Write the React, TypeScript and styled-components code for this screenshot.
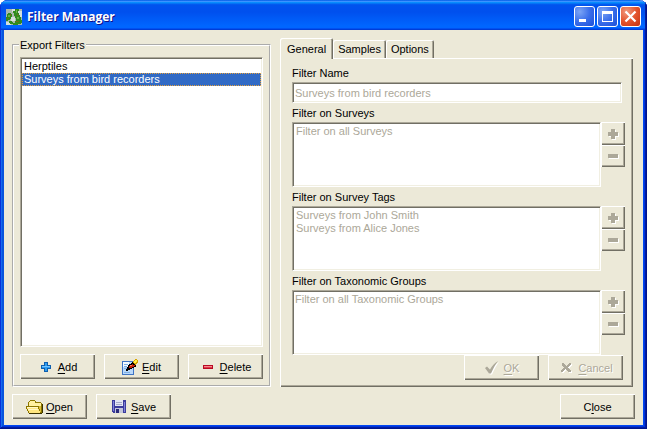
import React from "react";
import styled, { createGlobalStyle, css } from "styled-components";

const face = "#ece9d8";
const mid = "#aca899";
const dark = "#716f64";
const uiFont = `"Liberation Sans", Arial, sans-serif`;

const GlobalStyle = createGlobalStyle`
  *, *::before, *::after { box-sizing: border-box; }
  body { margin: 0; background: #fff; font: 11px/14px ${uiFont}; color: #000; }
  button, input { font: inherit; color: inherit; }
  ul { margin: 0; padding: 0; list-style: none; }
  svg { display: block; flex: none; }
`;

const raised = css`
  box-shadow: inset 1px 1px #fff, inset -1px -1px ${dark}, inset -2px -2px ${mid};
`;
const sunken = css`
  border: 1px solid;
  border-color: ${mid} #fff #fff ${mid};
  box-shadow: inset 1px 1px ${dark}, inset -1px -1px #f1efe2;
`;
const etched = css`
  color: ${mid};
  text-shadow: 1px 1px #fff;
`;

const Window = styled.main`
  display: flex;
  flex-direction: column;
  min-height: 100vh;
  padding: 0 4px 4px;
  background: ${face};
  border-radius: 8px 8px 0 0;
  overflow: hidden;
  box-shadow: inset -1px -1px #00138c, inset 1px 0 #0831d9, inset -2px -2px #001ea0,
    inset 2px 0 #166aee, inset -3px -3px #0133dd, inset 4px 0 #0855dd, inset -4px -4px #0048f1;
`;

const TitleBar = styled.header`
  display: flex;
  align-items: center;
  height: 30px;
  margin: 0 -4px;
  padding: 3px 6px 0;
  background: linear-gradient(180deg, #0058e6 0, #3a93ff 5%, #0997ff 7%, #0053ee 16%, #0050ee 40%, #0066ff 86%, #0066ff 92%, #005bff 94%, #003dd7 97%);
  box-shadow: inset 1px 0 #0831d9, inset -1px 0 #00138c, inset -2px 0 #001ea0;
`;
const Title = styled.h1`
  flex: 1;
  margin: 0 0 0 5px;
  font: bold 12px/18px "Open Sans", "Noto Sans", sans-serif;
  color: #fff;
  text-shadow: 1px 1px #0f1089;
`;
const Controls = styled.div`
  display: flex;
  gap: 2px;
`;
const ControlButton = styled.button<{ $danger?: boolean }>`
  display: grid;
  place-items: center;
  width: 21px;
  height: 21px;
  padding: 0;
  border: 1px solid #fff;
  border-radius: 3px;
  background: ${(p) =>
    p.$danger
      ? "radial-gradient(circle at 30% 25%, #f09a80, #e4552e 50%, #c43210)"
      : "radial-gradient(circle at 25% 25%, #7ba4f5, #3a6eea 50%, #1c4fd8)"};
`;

const Body = styled.div`
  flex: 1;
  display: flex;
  flex-direction: column;
  gap: 7px;
  padding: 8px 8px 6px;
`;
const Columns = styled.div`
  flex: 1;
  display: grid;
  grid-template-columns: minmax(0, 259fr) minmax(0, 353fr);
  gap: 9px;
  padding-right: 2px;
`;
const Group = styled.fieldset`
  display: flex;
  flex-direction: column;
  gap: 7px;
  min-width: 0;
  margin: 0;
  padding: 5px 6px 6px;
  border: 2px groove #fff;
`;
const Legend = styled.legend`
  margin-left: -1px;
  padding: 0 1px;
`;
const List = styled.ul<{ $disabled?: boolean; $flush?: boolean }>`
  ${sunken}
  flex: 1;
  min-width: 0;
  min-height: 65px;
  padding: ${(p) => (p.$flush ? "2px 0" : "2px 1px")};
  background: #fff;
  color: ${(p) => (p.$disabled ? mid : "#000")};
`;
const Item = styled.li<{ $selected?: boolean }>`
  padding: 0 2px;
  line-height: 13px;
  ${(p) =>
    p.$selected &&
    css`
      background: #316ac5;
      color: #fff;
      outline: 1px dotted #e5a03c;
      outline-offset: -1px;
    `}
`;
const ButtonRow = styled.div<{ $end?: boolean }>`
  display: flex;
  gap: 9px;
  justify-content: ${(p) => (p.$end ? "flex-end" : "flex-start")};
  padding-right: ${(p) => (p.$end ? "2px" : "0")};
`;
const Button = styled.button`
  ${raised}
  display: flex;
  align-items: center;
  justify-content: center;
  gap: 4px;
  width: 75px;
  height: 25px;
  padding: 0;
  border: 0;
  background: ${face};
  &:disabled { ${etched} }
  &:disabled svg { filter: drop-shadow(1px 1px 0 #fff); }
`;
const IconSlot = styled.span`
  display: grid;
  place-items: center;
  width: 16px;
  height: 16px;
`;
const Key = styled.span`
  text-decoration: underline;
  text-underline-offset: 2px;
`;
const Footer = styled.footer`
  display: flex;
  justify-content: space-between;
`;

const Tabbed = styled.section`
  display: flex;
  flex-direction: column;
  min-width: 0;
`;
const TabList = styled.div`
  display: flex;
  align-items: flex-end;
  height: 20px;
`;
const Tab = styled.button<{ $active?: boolean }>`
  height: ${(p) => (p.$active ? "21px" : "18px")};
  margin-bottom: ${(p) => (p.$active ? "-1px" : "0")};
  padding: 0 ${(p) => (p.$active ? "7px" : "5px")};
  border: 0;
  border-radius: 2px 2px 0 0;
  background: ${face};
  box-shadow: inset 1px 1px #fff, inset -1px 0 ${dark}, inset -2px 0 ${mid};
  z-index: ${(p) => (p.$active ? 1 : 0)};
`;
const Panel = styled.div`
  ${raised}
  flex: 1;
  display: flex;
  flex-direction: column;
  padding: 8px 8px 7px 12px;
`;
const Field = styled.div`
  display: flex;
  flex-direction: column;
  gap: 2px;
  padding-bottom: 3px;
`;
const ListField = styled(Field)`
  flex: 1;
  &:nth-last-child(2) { padding-bottom: 0; }
`;
const Caption = styled.label`
  height: 14px;
`;
const TextBox = styled.input`
  ${sunken}
  height: 21px;
  margin-right: 3px;
  padding: 0 2px;
  background: #fff;
  &:disabled { color: ${mid}; }
`;
const ListRow = styled.div`
  flex: 1;
  display: flex;
`;
const Stepper = styled.div`
  display: flex;
  flex-direction: column;
`;
const StepButton = styled.button`
  ${raised}
  display: grid;
  place-items: center;
  width: 24px;
  height: 23px;
  padding: 0;
  border: 0;
  background: ${face};
  & + & { height: 22px; }
  svg { filter: drop-shadow(1px 1px 0 #fff); }
`;

const AppIcon = () => (
  <svg width="16" height="16" viewBox="0 0 16 16" shapeRendering="crispEdges" aria-hidden="true">
    <path d="M0 0h16v16H0z" fill="#a9b8ae" />
    <path d="M6 0h3v3H6zM5 8h4v4H5zM12 2h4v6h-2V6h-2zM0 13h5v3H0z" fill="#d5e0dc" />
    <path d="M1 5h1V4h3v1h1v3H5v2H4v1H2v1H0V8h1zM9 0h4v2h-1v2h1v2h1v2h1v3h1v3h-1v1h-3v1H7v-2h2v-2h1V9H9V7H8V4H7V2h2z" fill="#2f8b20" />
    <path d="M3 12h3v1h1v2H4v-1H3z" fill="#2f8b20" />
    <path d="M2 6h2v2H2zM10 1h1v3h-1zM11 8h2v2h-2z" fill="#66b044" />
    <path d="M4 5h1v2H4zM1 9h2v1H1zM11 5h1v2h-1zM10 12h3v1h-3z" fill="#6f6b18" />
  </svg>
);
const AddIcon = () => (
  <svg width="10" height="10" viewBox="0 0 10 10" shapeRendering="crispEdges" aria-hidden="true">
    <path d="M3 0h4v3h3v4H7v3H3V7H0V3h3z" fill="#0f5fae" />
    <path d="M4 1h2v3h3v2H6v3H4V6H1V4h3z" fill="#2e9cf0" />
    <path d="M4 1h1v3H1v1h4V4h4v1H5V1z" fill="#76c6ff" />
  </svg>
);
const EditIcon = () => (
  <svg width="16" height="16" viewBox="0 0 16 16" shapeRendering="crispEdges" aria-hidden="true">
    <path d="M0 2h12v14H0z" fill="#3f74c4" />
    <path d="M1 3h10v12H1z" fill="#b9d8fa" />
    <path d="M1 3h6v5H1z" fill="#f4faff" />
    <path d="M2 5h4v1H2zM2 7h3v1H2zM2 9h3v1H2zM2 13h6v1H2z" fill="#7fb0e6" />
    <path d="M4 12v-2h1V8h1V6h1V5h2V4h1V3h1v1h1v1h1v1h1v2h-2v1h-2v1H8v1H6v1z" fill="#000" />
    <path d="M7 7h1V6h2V5h1v1h2v1h-1v1h-2v1H7z" fill="#c8200c" />
    <path d="M8 6h2v1H8z" fill="#ff7a50" />
    <path d="M11 2h1V1h1V0h2v1h1v3h-1v1h-1v1h-1V5h-1V4h-1z" fill="#d8a400" />
    <path d="M12 2h1V1h2v2h-1v1h-2z" fill="#fff04a" />
  </svg>
);
const DeleteIcon = () => (
  <svg width="10" height="4" viewBox="0 0 10 4" shapeRendering="crispEdges" aria-hidden="true">
    <path d="M0 0h10v4H0z" fill="#b80a24" />
    <path d="M1 1h8v1H1z" fill="#f58a90" />
    <path d="M1 2h8v1H1z" fill="#e23845" />
  </svg>
);
const OpenIcon = () => (
  <svg width="17" height="14" viewBox="0 0 17 14" shapeRendering="crispEdges" aria-hidden="true">
    <path d="M2 2h1V1h1V0h5v1h1v1h5v1h1v10h-1v1H3v-1H2v-2H1V9H0V6h2z" fill="#8c7600" />
    <path d="M3 2h1V1h5v2h6v3H3z" fill="#fff0a0" />
    <path d="M1 7h11v2h1v2h1v2H3v-2H2V9H1z" fill="#ffe680" />
    <path d="M1 7h11v1H1zM2 9h10v1H2z" fill="#fff8c8" />
    <path d="M13 6h2v6h-1V9h-1z" fill="#d9bd38" />
    <path d="M16 4h1v9h-1zM3 13h13v1H3z" fill="#3a3200" />
  </svg>
);
const SaveIcon = () => (
  <svg width="14" height="13" viewBox="0 0 14 13" shapeRendering="crispEdges" aria-hidden="true">
    <path d="M0 0h14v13H1v-1H0z" fill="#3c3c9c" />
    <path d="M1 1h1v10H1zM12 2h1v10h-1z" fill="#7f80d8" />
    <path d="M3 0h8v6H3z" fill="#e4e6f4" />
    <path d="M4 2h6v1H4zM4 4h6v1H4z" fill="#a6a9c8" />
    <path d="M3 8h8v5H3z" fill="#c3c5da" />
    <path d="M4 9h3v4H4z" fill="#2b2b7c" />
  </svg>
);
const OkIcon = () => (
  <svg width="14" height="13" viewBox="0 0 14 13" aria-hidden="true">
    <path d="M0 7 2 5.5 5 8.500C7 5 9.500 2 13 0 10 4 8 8 6 12.500H4Z" fill={mid} />
  </svg>
);
const CancelIcon = () => (
  <svg width="10" height="9" viewBox="0 0 10 9" shapeRendering="crispEdges" aria-hidden="true">
    <path d="M1 0h2v1h1v1h1v1h1V2h1V1h1V0h2v2H9v1H8v1H7v1h1v1h1v1h1v2H7V8H6V7H5V6H4v1H3v1H2v1H0V7h1V6h1V5h1V4H2V3H1z" fill={mid} />
  </svg>
);
const PlusIcon = () => (
  <svg width="10" height="10" viewBox="0 0 10 10" shapeRendering="crispEdges" aria-hidden="true">
    <path d="M3 0h4v3h3v4H7v3H3V7H0V3h3z" fill={mid} />
  </svg>
);
const MinusIcon = () => (
  <svg width="10" height="4" viewBox="0 0 10 4" shapeRendering="crispEdges" aria-hidden="true">
    <path d="M0 0h10v4H0z" fill={mid} />
  </svg>
);

const filterLists = [
  { id: "surveys", label: "Filter on Surveys", items: ["Filter on all Surveys"], flush: false },
  { id: "tags", label: "Filter on Survey Tags", items: ["Surveys from John Smith", "Surveys from Alice Jones"], flush: false },
  { id: "groups", label: "Filter on Taxonomic Groups", items: ["Filter on all Taxonomic Groups"], flush: true },
];

export default function App() {
  return (
    <>
      <GlobalStyle />
      <Window>
        <TitleBar>
          <AppIcon />
          <Title>Filter Manager</Title>
          <Controls>
            <ControlButton aria-label="Minimize">
              <svg width="19" height="19" viewBox="0 0 19 19" shapeRendering="crispEdges">
                <path d="M4 12h7v3H4z" fill="#fff" />
              </svg>
            </ControlButton>
            <ControlButton aria-label="Maximize">
              <svg width="19" height="19" viewBox="0 0 19 19" shapeRendering="crispEdges">
                <path d="M4 4h11v11H4zM5 7v7h9V7z" fill="#fff" fillRule="evenodd" />
              </svg>
            </ControlButton>
            <ControlButton $danger aria-label="Close window">
              <svg width="19" height="19" viewBox="0 0 19 19">
                <path d="M4.500 4.500l10 10M14.500 4.500l-10 10" stroke="#fff" strokeWidth="2.200" />
              </svg>
            </ControlButton>
          </Controls>
        </TitleBar>
        <Body>
          <Columns>
            <Group>
              <Legend>Export Filters</Legend>
              <List role="listbox" aria-label="Export Filters">
                <Item role="option" aria-selected={false}>Herptiles</Item>
                <Item role="option" aria-selected $selected>Surveys from bird recorders</Item>
              </List>
              <ButtonRow>
                <Button><IconSlot><AddIcon /></IconSlot><span><Key>A</Key>dd</span></Button>
                <Button><IconSlot><EditIcon /></IconSlot><span><Key>E</Key>dit</span></Button>
                <Button><IconSlot><DeleteIcon /></IconSlot><span><Key>D</Key>elete</span></Button>
              </ButtonRow>
            </Group>
            <Tabbed>
              <TabList role="tablist">
                <Tab role="tab" aria-selected $active>General</Tab>
                <Tab role="tab" aria-selected={false}>Samples</Tab>
                <Tab role="tab" aria-selected={false}>Options</Tab>
              </TabList>
              <Panel role="tabpanel" aria-label="General">
                <Field>
                  <Caption htmlFor="filter-name">Filter Name</Caption>
                  <TextBox id="filter-name" disabled defaultValue="Surveys from bird recorders" />
                </Field>
                {filterLists.map((f) => (
                  <ListField key={f.id}>
                    <Caption as="span" id={f.id}>{f.label}</Caption>
                    <ListRow>
                      <List role="listbox" aria-labelledby={f.id} aria-disabled $disabled $flush={f.flush}>
                        {f.items.map((item) => (
                          <Item key={item} role="option" aria-selected={false}>{item}</Item>
                        ))}
                      </List>
                      <Stepper>
                        <StepButton disabled aria-label={`Add: ${f.label}`}><PlusIcon /></StepButton>
                        <StepButton disabled aria-label={`Remove: ${f.label}`}><MinusIcon /></StepButton>
                      </Stepper>
                    </ListRow>
                  </ListField>
                ))}
                <ButtonRow $end>
                  <Button disabled><IconSlot><OkIcon /></IconSlot><span><Key>O</Key>K</span></Button>
                  <Button disabled><IconSlot><CancelIcon /></IconSlot><span><Key>C</Key>ancel</span></Button>
                </ButtonRow>
              </Panel>
            </Tabbed>
          </Columns>
          <Footer>
            <ButtonRow>
              <Button><IconSlot><OpenIcon /></IconSlot><span><Key>O</Key>pen</span></Button>
              <Button><IconSlot><SaveIcon /></IconSlot><span><Key>S</Key>ave</span></Button>
            </ButtonRow>
            <Button><span>C<Key>l</Key>ose</span></Button>
          </Footer>
        </Body>
      </Window>
    </>
  );
}
